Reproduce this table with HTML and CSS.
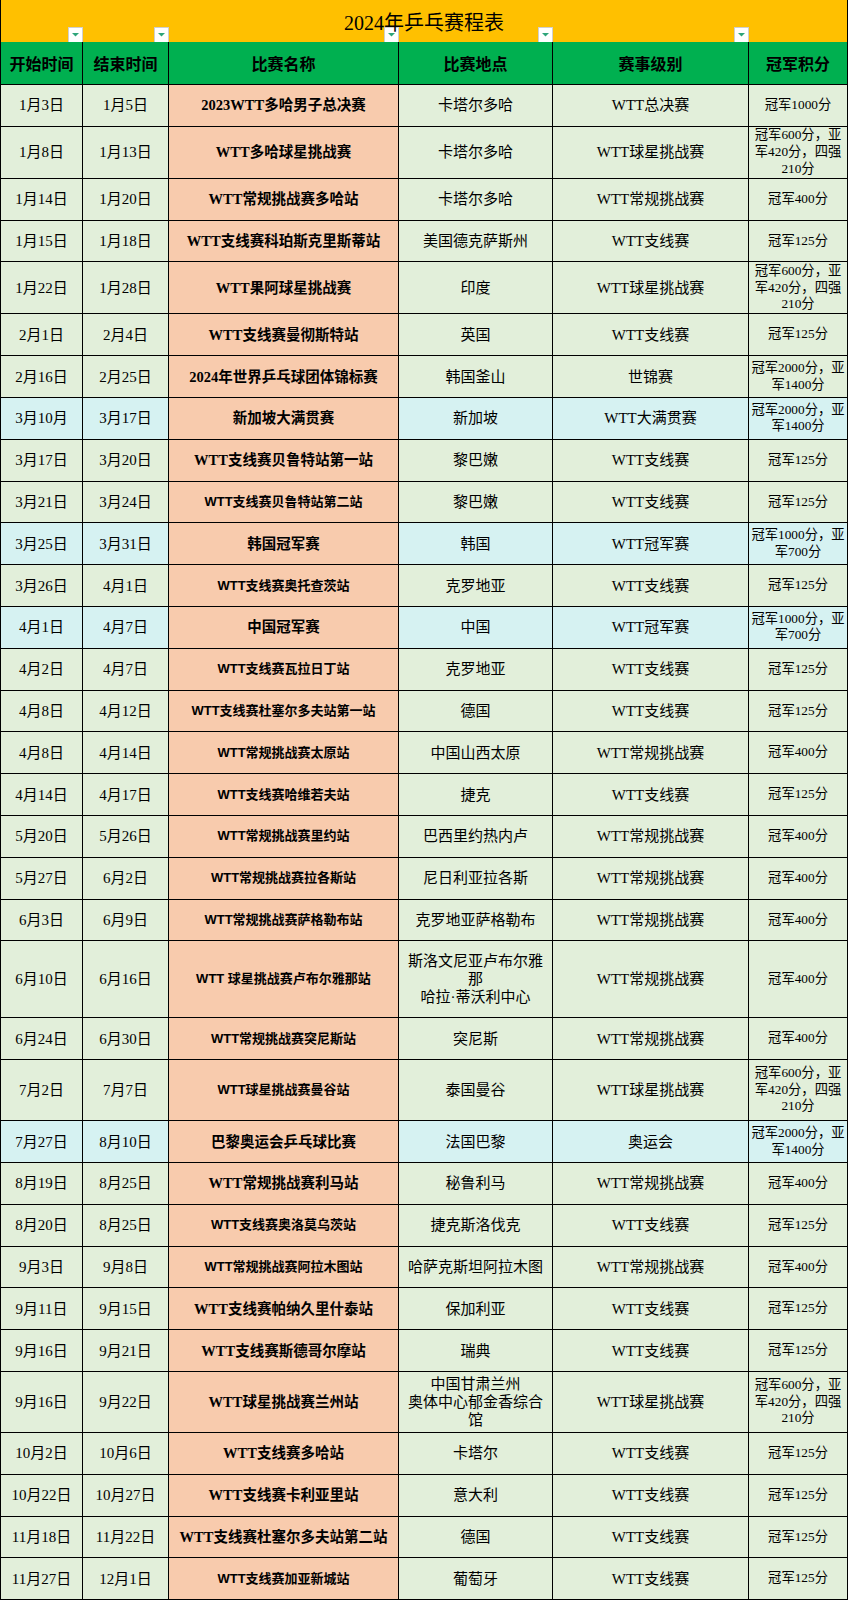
FILE: index.html
```html
<!DOCTYPE html>
<html lang="zh-CN">
<head>
<meta charset="utf-8">
<title>2024年乒乓赛程表</title>
<link rel="stylesheet" href="styles.css">
</head>
<body>
<table class="sched">
  <colgroup>
    <col class="c1"><col class="c2"><col class="c3"><col class="c4"><col class="c5"><col class="c6">
  </colgroup>
  <thead>
    <tr class="title-row">
      <th colspan="6" class="title-cell">
        <span class="title-text">2024年乒乓赛程表</span>
        <div class="filters">
          <div class="fcell"><span class="fbtn"><svg viewBox="0 0 15 15" width="15" height="15"><polygon points="4,6 11,6 7.5,9.5" fill="#2ea57a"/></svg></span></div>
          <div class="fcell"><span class="fbtn"><svg viewBox="0 0 15 15" width="15" height="15"><polygon points="4,6 11,6 7.5,9.5" fill="#2ea57a"/></svg></span></div>
          <div class="fcell"><span class="fbtn"><svg viewBox="0 0 15 15" width="15" height="15"><polygon points="4,6 11,6 7.5,9.5" fill="#2ea57a"/></svg></span></div>
          <div class="fcell"><span class="fbtn"><svg viewBox="0 0 15 15" width="15" height="15"><polygon points="4,6 11,6 7.5,9.5" fill="#2ea57a"/></svg></span></div>
          <div class="fcell"><span class="fbtn"><svg viewBox="0 0 15 15" width="15" height="15"><polygon points="4,6 11,6 7.5,9.5" fill="#2ea57a"/></svg></span></div>
          <div class="fcell"></div>
        </div>
      </th>
    </tr>
    <tr class="head">
      <th>开始时间</th><th>结束时间</th><th>比赛名称</th><th>比赛地点</th><th>赛事级别</th><th>冠军积分</th>
    </tr>
  </thead>
  <tbody>
    <tr class="r"><td>1月3日</td><td>1月5日</td><td class="ev">2023WTT多哈男子总决赛</td><td>卡塔尔多哈</td><td>WTT总决赛</td><td class="pt">冠军1000分</td></tr>
    <tr class="r52"><td>1月8日</td><td>1月13日</td><td class="ev">WTT多哈球星挑战赛</td><td>卡塔尔多哈</td><td>WTT球星挑战赛</td><td class="pt">冠军600分，亚军420分，四强210分</td></tr>
    <tr class="r"><td>1月14日</td><td>1月20日</td><td class="ev">WTT常规挑战赛多哈站</td><td>卡塔尔多哈</td><td>WTT常规挑战赛</td><td class="pt">冠军400分</td></tr>
    <tr class="r"><td>1月15日</td><td>1月18日</td><td class="ev">WTT支线赛科珀斯克里斯蒂站</td><td>美国德克萨斯州</td><td>WTT支线赛</td><td class="pt">冠军125分</td></tr>
    <tr class="r52"><td>1月22日</td><td>1月28日</td><td class="ev">WTT果阿球星挑战赛</td><td>印度</td><td>WTT球星挑战赛</td><td class="pt">冠军600分，亚军420分，四强210分</td></tr>
    <tr class="r"><td>2月1日</td><td>2月4日</td><td class="ev">WTT支线赛曼彻斯特站</td><td>英国</td><td>WTT支线赛</td><td class="pt">冠军125分</td></tr>
    <tr class="r"><td>2月16日</td><td>2月25日</td><td class="ev">2024年世界乒乓球团体锦标赛</td><td>韩国釜山</td><td>世锦赛</td><td class="pt">冠军2000分，亚军1400分</td></tr>
    <tr class="r b"><td>3月10月</td><td>3月17日</td><td class="ev">新加坡大满贯赛</td><td>新加坡</td><td>WTT大满贯赛</td><td class="pt">冠军2000分，亚军1400分</td></tr>
    <tr class="r"><td>3月17日</td><td>3月20日</td><td class="ev">WTT支线赛贝鲁特站第一站</td><td>黎巴嫩</td><td>WTT支线赛</td><td class="pt">冠军125分</td></tr>
    <tr class="r"><td>3月21日</td><td>3月24日</td><td class="ev s">WTT支线赛贝鲁特站第二站</td><td>黎巴嫩</td><td>WTT支线赛</td><td class="pt">冠军125分</td></tr>
    <tr class="r b"><td>3月25日</td><td>3月31日</td><td class="ev">韩国冠军赛</td><td>韩国</td><td>WTT冠军赛</td><td class="pt">冠军1000分，亚军700分</td></tr>
    <tr class="r"><td>3月26日</td><td>4月1日</td><td class="ev s">WTT支线赛奥托查茨站</td><td>克罗地亚</td><td>WTT支线赛</td><td class="pt">冠军125分</td></tr>
    <tr class="r b"><td>4月1日</td><td>4月7日</td><td class="ev">中国冠军赛</td><td>中国</td><td>WTT冠军赛</td><td class="pt">冠军1000分，亚军700分</td></tr>
    <tr class="r"><td>4月2日</td><td>4月7日</td><td class="ev s">WTT支线赛瓦拉日丁站</td><td>克罗地亚</td><td>WTT支线赛</td><td class="pt">冠军125分</td></tr>
    <tr class="r"><td>4月8日</td><td>4月12日</td><td class="ev s">WTT支线赛杜塞尔多夫站第一站</td><td>德国</td><td>WTT支线赛</td><td class="pt">冠军125分</td></tr>
    <tr class="r"><td>4月8日</td><td>4月14日</td><td class="ev s">WTT常规挑战赛太原站</td><td>中国山西太原</td><td>WTT常规挑战赛</td><td class="pt">冠军400分</td></tr>
    <tr class="r"><td>4月14日</td><td>4月17日</td><td class="ev s">WTT支线赛哈维若夫站</td><td>捷克</td><td>WTT支线赛</td><td class="pt">冠军125分</td></tr>
    <tr class="r"><td>5月20日</td><td>5月26日</td><td class="ev s">WTT常规挑战赛里约站</td><td>巴西里约热内卢</td><td>WTT常规挑战赛</td><td class="pt">冠军400分</td></tr>
    <tr class="r"><td>5月27日</td><td>6月2日</td><td class="ev s">WTT常规挑战赛拉各斯站</td><td>尼日利亚拉各斯</td><td>WTT常规挑战赛</td><td class="pt">冠军400分</td></tr>
    <tr class="r"><td>6月3日</td><td>6月9日</td><td class="ev s">WTT常规挑战赛萨格勒布站</td><td>克罗地亚萨格勒布</td><td>WTT常规挑战赛</td><td class="pt">冠军400分</td></tr>
    <tr class="r77"><td>6月10日</td><td>6月16日</td><td class="ev s">WTT 球星挑战赛卢布尔雅那站</td><td>斯洛文尼亚卢布尔雅那<br>哈拉·蒂沃利中心</td><td>WTT常规挑战赛</td><td class="pt">冠军400分</td></tr>
    <tr class="r"><td>6月24日</td><td>6月30日</td><td class="ev s">WTT常规挑战赛突尼斯站</td><td>突尼斯</td><td>WTT常规挑战赛</td><td class="pt">冠军400分</td></tr>
    <tr class="r61"><td>7月2日</td><td>7月7日</td><td class="ev s">WTT球星挑战赛曼谷站</td><td>泰国曼谷</td><td>WTT球星挑战赛</td><td class="pt">冠军600分，亚军420分，四强210分</td></tr>
    <tr class="r b"><td>7月27日</td><td>8月10日</td><td class="ev">巴黎奥运会乒乓球比赛</td><td>法国巴黎</td><td>奥运会</td><td class="pt">冠军2000分，亚军1400分</td></tr>
    <tr class="r"><td>8月19日</td><td>8月25日</td><td class="ev">WTT常规挑战赛利马站</td><td>秘鲁利马</td><td>WTT常规挑战赛</td><td class="pt">冠军400分</td></tr>
    <tr class="r"><td>8月20日</td><td>8月25日</td><td class="ev s">WTT支线赛奥洛莫乌茨站</td><td>捷克斯洛伐克</td><td>WTT支线赛</td><td class="pt">冠军125分</td></tr>
    <tr class="r"><td>9月3日</td><td>9月8日</td><td class="ev s">WTT常规挑战赛阿拉木图站</td><td>哈萨克斯坦阿拉木图</td><td>WTT常规挑战赛</td><td class="pt">冠军400分</td></tr>
    <tr class="r"><td>9月11日</td><td>9月15日</td><td class="ev">WTT支线赛帕纳久里什泰站</td><td>保加利亚</td><td>WTT支线赛</td><td class="pt">冠军125分</td></tr>
    <tr class="r"><td>9月16日</td><td>9月21日</td><td class="ev">WTT支线赛斯德哥尔摩站</td><td>瑞典</td><td>WTT支线赛</td><td class="pt">冠军125分</td></tr>
    <tr class="r61"><td>9月16日</td><td>9月22日</td><td class="ev">WTT球星挑战赛兰州站</td><td>中国甘肃兰州<br>奥体中心郁金香综合馆</td><td>WTT球星挑战赛</td><td class="pt">冠军600分，亚军420分，四强210分</td></tr>
    <tr class="r"><td>10月2日</td><td>10月6日</td><td class="ev">WTT支线赛多哈站</td><td>卡塔尔</td><td>WTT支线赛</td><td class="pt">冠军125分</td></tr>
    <tr class="r"><td>10月22日</td><td>10月27日</td><td class="ev">WTT支线赛卡利亚里站</td><td>意大利</td><td>WTT支线赛</td><td class="pt">冠军125分</td></tr>
    <tr class="r"><td>11月18日</td><td>11月22日</td><td class="ev">WTT支线赛杜塞尔多夫站第二站</td><td>德国</td><td>WTT支线赛</td><td class="pt">冠军125分</td></tr>
    <tr class="r"><td>11月27日</td><td>12月1日</td><td class="ev s">WTT支线赛加亚新城站</td><td>葡萄牙</td><td>WTT支线赛</td><td class="pt">冠军125分</td></tr>
  </tbody>
</table>
</body>
</html>
```
FILE: styles.css
```css
html, body {
  margin: 0;
  padding: 0;
  background: #ffffff;
}

.sched {
  border-collapse: collapse;
  table-layout: fixed;
  width: 847px;
  font-family: "Liberation Serif", "Noto Sans CJK SC", serif;
  color: #000000;
}

.c1 { width: 82px; }
.c2 { width: 86px; }
.c3 { width: 230px; }
.c4 { width: 154px; }
.c5 { width: 196px; }
.c6 { width: 99px; }

.sched td,
.sched th {
  border: 1px solid #000000;
  padding: 0 3px;
  text-align: center;
  vertical-align: middle;
}

.title-cell {
  position: relative;
  height: 42px;
  box-sizing: border-box;
  background: #ffc000;
  border-top: none !important;
  border-bottom: none !important;
  font-size: 20px;
  font-weight: 400;
  line-height: 24px;
  padding: 3px 0 0 !important;
}

.title-text {
  position: relative;
  z-index: 1;
}

.filters {
  position: absolute;
  left: 0;
  right: 0;
  bottom: 0;
  display: grid;
  grid-template-columns: 82px 86px 230px 154px 196px 1fr;
  height: 15px;
}

.fcell {
  display: flex;
  justify-content: flex-end;
  align-items: flex-end;
}

.fbtn {
  display: block;
  width: 15px;
  height: 15px;
  box-sizing: border-box;
  background: #ffffff;
  border: 1px solid #cfcfcf;
  border-bottom: none;
}

.fbtn svg {
  display: block;
  margin: -1px 0 0 -1px;
}

.head th {
  height: 42px;
  background: #00b050;
  border-top: none;
  font-family: "Noto Sans CJK SC", sans-serif;
  font-weight: 700;
  font-size: 16px;
  line-height: 20px;
}

.sched td {
  background: #e2efda;
  font-size: 15px;
  line-height: 18px;
}

.r { height: 41.8px; }
.r52 { height: 52px; }
.r61 { height: 61px; }
.r77 { height: 77px; }

.sched tr.b td {
  background: #d6f2f2;
}

.sched td.ev,
.sched tr.b td.ev {
  background: #f8cbad;
  font-weight: 700;
  font-size: 14.5px;
  white-space: nowrap;
  padding: 0;
}

.sched td.ev.s {
  font-family: "Liberation Sans", "Noto Sans CJK SC", sans-serif;
  font-size: 13px;
}

.sched td.pt {
  font-size: 13.3px;
  line-height: 16.7px;
  padding: 0 1px;
}
```
